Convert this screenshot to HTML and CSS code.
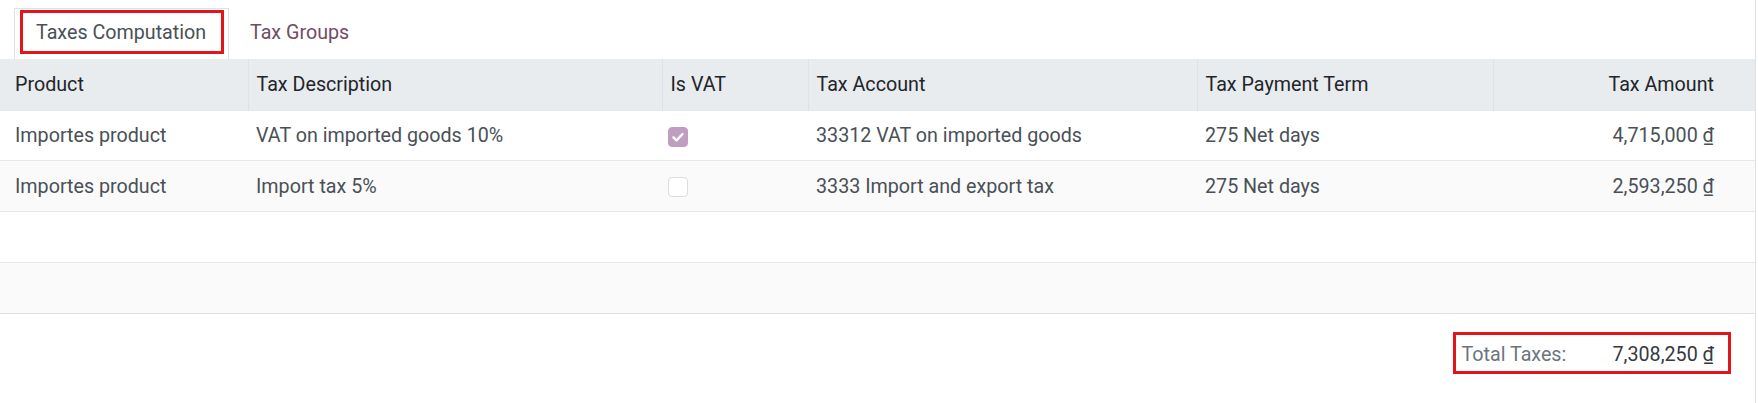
FILE: index.html
```html
<!DOCTYPE html>
<html>
<head>
<meta charset="utf-8">
<link rel="stylesheet" href="styles.css">
</head>
<body>
<div class="page">
  <div class="tabs">
    <div class="tab active"><span class="mark mark-tab"></span>Taxes Computation</div>
    <div class="tab">Tax Groups</div>
  </div>
  <table class="list">
    <colgroup>
      <col class="c-product">
      <col class="c-desc">
      <col class="c-vat">
      <col class="c-account">
      <col class="c-term">
      <col class="c-amount">
    </colgroup>
    <thead>
      <tr>
        <th class="first">Product</th>
        <th>Tax Description</th>
        <th>Is VAT</th>
        <th>Tax Account</th>
        <th>Tax Payment Term</th>
        <th class="num last">Tax Amount</th>
      </tr>
    </thead>
    <tbody>
      <tr>
        <td class="first">Importes product</td>
        <td>VAT on imported goods 10%</td>
        <td><span class="check on"><svg viewBox="0 0 20 20" width="20" height="20"><path d="M5.5 10.3l3 3 6-6.2" fill="none" stroke="#fff" stroke-width="2.4" stroke-linecap="round" stroke-linejoin="round"/></svg></span></td>
        <td>33312 VAT on imported goods</td>
        <td>275 Net days</td>
        <td class="num last">4,715,000 ₫</td>
      </tr>
      <tr class="alt">
        <td class="first">Importes product</td>
        <td>Import tax 5%</td>
        <td><span class="check"></span></td>
        <td>3333 Import and export tax</td>
        <td>275 Net days</td>
        <td class="num last">2,593,250 ₫</td>
      </tr>
      <tr class="empty">
        <td colspan="6"></td>
      </tr>
      <tr class="empty alt">
        <td colspan="6"></td>
      </tr>
    </tbody>
  </table>
  <div class="footer">
    <div class="totals">
      <span class="mark mark-total"></span>
      <span class="t-label">Total Taxes:</span>
      <span class="t-value">7,308,250 ₫</span>
    </div>
  </div>
</div>
</body>
</html>
```

FILE: styles.css
```css
html, body {
  margin: 0;
  padding: 0;
  background: #ffffff;
}
body {
  font-family: Roboto, "Noto Sans", "Liberation Sans", sans-serif;
  font-size: 19.7px;
  color: #495057;
}
.page {
  width: 1755px;
  min-height: 403px;
  border-right: 1px solid #dee2e6;
  box-sizing: content-box;
}
.tabs {
  display: flex;
  padding: 8px 0 0 14px;
  height: 51px;
}
.tab {
  position: relative;
  box-sizing: border-box;
  height: 51px;
  padding: 10px 20px 0 20px;
  line-height: 28px;
  color: #714b67;
  border: 1px solid transparent;
  border-bottom: none;
}
.tab.active {
  color: #495057;
  border-color: #dee2e6;
  background: #fff;
  width: 215px;
  padding-left: 21px;
}
.mark {
  position: absolute;
  border: 3px solid #e3141b;
  box-sizing: border-box;
  pointer-events: none;
}
.mark-tab {
  left: 5px;
  top: 1px;
  width: 204px;
  height: 44px;
}
.list {
  width: 1755px;
  border-collapse: collapse;
  table-layout: fixed;
}
.c-product { width: 248px; }
.c-desc { width: 414px; }
.c-vat { width: 146px; }
.c-account { width: 389px; }
.c-term { width: 296px; }
.c-amount { width: 262px; }
th {
  height: 51px;
  padding: 0 8px;
  background: #e9ecef;
  color: #212529;
  font-weight: 400;
  text-align: left;
  border-left: 1px solid #dee2e6;
  box-sizing: border-box;
  white-space: nowrap;
}
th.first { border-left: none; padding-left: 15px; }
td {
  height: 49.75px;
  padding: 0 8px;
  border-top: 1px solid #e5e7ea;
  white-space: nowrap;
  vertical-align: middle;
}
td.first { padding-left: 15px; }
.num { text-align: right; }
.last { padding-right: 41px; }
th.num { text-align: right; }
tr.alt td { background: #fafafa; }
.list tbody tr:last-child td { border-bottom: 1px solid #dee2e6; }
.check {
  display: inline-block;
  width: 20px;
  height: 20px;
  box-sizing: border-box;
  border: 1px solid #dadde1;
  border-radius: 4px;
  background: #fff;
  vertical-align: middle;
  margin-left: -2px;
}
.check.on {
  background: #bf9fbf;
  border-color: #bf9fbf;
}
.check svg {
  display: block;
  margin: -1px;
}
.footer {
  display: flex;
  justify-content: flex-end;
  padding: 20px 41px 0 0;
}
.totals {
  position: relative;
  display: flex;
  align-items: baseline;
  border-top: 1px solid #eceef0;
  padding-top: 6px;
  line-height: 28px;
}
.t-label {
  color: #6c757d;
  width: 151px;
}
.t-value {
  color: #343a40;
}
.mark-total {
  left: -9px;
  right: -17px;
  top: -3px;
  bottom: -5px;
}
```
